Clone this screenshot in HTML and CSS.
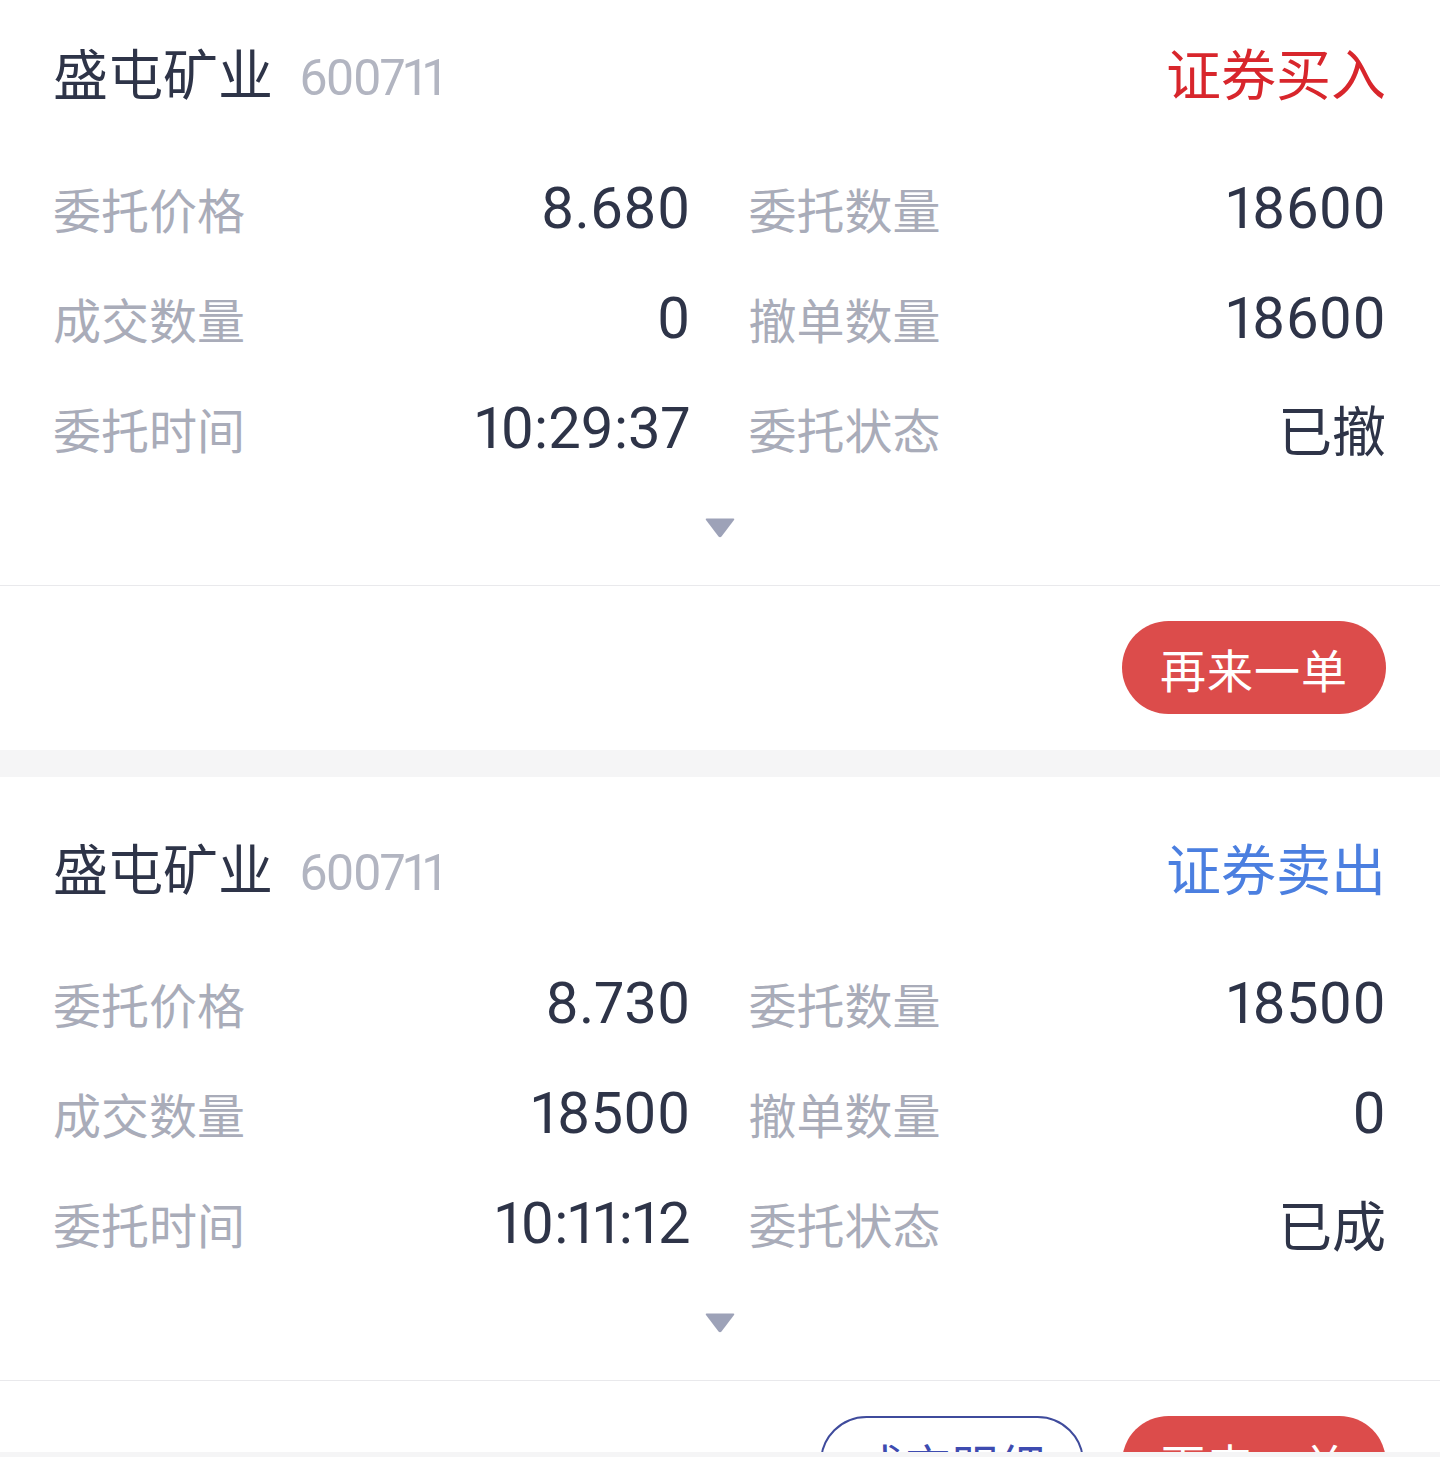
FILE: index.html
```
<!doctype html>
<html lang="zh-CN">
<head>
	<meta charset="utf-8" />
	<meta name="viewport" content="width=device-width, initial-scale=1.0" />
	<title>当日委托</title>
	<link rel="stylesheet" href="styles.css">
</head>
<body>
	<main class="order-list">
		<section class="order">
			<div class="order-body">
				<header class="order-head">
					<div class="stock">
						<span class="stock-name">盛屯矿业</span>
						<span class="stock-code">600711</span>
					</div>
					<span class="side buy">证券买入</span>
				</header>

				<div class="fields">
					<div class="field"><span class="label">委托价格</span><span class="value">8.680</span></div>
					<div class="field"><span class="label">委托数量</span><span class="value">18600</span></div>
					<div class="field"><span class="label">成交数量</span><span class="value">0</span></div>
					<div class="field"><span class="label">撤单数量</span><span class="value">18600</span></div>
					<div class="field"><span class="label">委托时间</span><span class="value">10:29:37</span></div>
					<div class="field"><span class="label">委托状态</span><span class="value cjk">已撤</span></div>
				</div>

				<div class="toggle">
					<svg width="32" height="22" viewBox="0 0 32 22"><path d="M2.5 1.5 H29.5 Q31 1.5 30 3 L17.5 19.5 Q16 21 14.5 19.5 L2 3 Q1 1.5 2.5 1.5 Z" fill="#9da2b8"/></svg>
				</div>
			</div>

			<div class="order-actions">
				<a class="btn btn-red">再来一单</a>
			</div>
		</section>

		<section class="order">
			<div class="order-body">
				<header class="order-head">
					<div class="stock">
						<span class="stock-name">盛屯矿业</span>
						<span class="stock-code">600711</span>
					</div>
					<span class="side sell">证券卖出</span>
				</header>

				<div class="fields">
					<div class="field"><span class="label">委托价格</span><span class="value">8.730</span></div>
					<div class="field"><span class="label">委托数量</span><span class="value">18500</span></div>
					<div class="field"><span class="label">成交数量</span><span class="value">18500</span></div>
					<div class="field"><span class="label">撤单数量</span><span class="value">0</span></div>
					<div class="field"><span class="label">委托时间</span><span class="value">10:11:12</span></div>
					<div class="field"><span class="label">委托状态</span><span class="value cjk">已成</span></div>
				</div>

				<div class="toggle">
					<svg width="32" height="22" viewBox="0 0 32 22"><path d="M2.5 1.5 H29.5 Q31 1.5 30 3 L17.5 19.5 Q16 21 14.5 19.5 L2 3 Q1 1.5 2.5 1.5 Z" fill="#9da2b8"/></svg>
				</div>
			</div>

			<div class="order-actions">
				<a class="btn btn-outline">成交明细</a>
				<a class="btn btn-red">再来一单</a>
			</div>
		</section>
	</main>

	<div class="bottom-bar"></div>
</body>
</html>
```

FILE: styles.css
```
html, body {
	margin: 0;
	height: 100%;
	overflow: hidden;
	background: #f5f5f6;
	font-family: "Noto Sans CJK SC", sans-serif;
	color: #2e3448;
}

/* the list is scrolled a little, the first card is cut at the top */
.order-list {
	margin-top: -18px;
	display: flex;
	flex-direction: column;
	gap: 27px;
}

.order {
	background: #fff;
}

.order-body {
	padding: 54px 54px 0 53px;
	border-bottom: 1px solid #e9e9ec;
}

.order-head {
	display: flex;
	justify-content: space-between;
	align-items: center;
	height: 70px;
}

.stock {
	display: flex;
	align-items: baseline;
	gap: 26px;
}

.stock-name {
	font-size: 55px;
	line-height: 70px;
	color: #2e3448;
}

.stock-code {
	font-family: Roboto, sans-serif;
	font-size: 50px;
	font-variant-numeric: proportional-nums;
	letter-spacing: -2px;
	color: #b2b5c1;
}

.side {
	font-size: 55px;
	line-height: 70px;
}
.side.buy { color: #d8262c; }
.side.sell { color: #4b7fe0; }

.fields {
	margin-top: 47px;
	display: grid;
	grid-template-columns: 1fr 1fr;
	column-gap: 58px;
}

.field {
	display: flex;
	justify-content: space-between;
	align-items: center;
	height: 110px;
}

.label {
	font-size: 48px;
	color: #a9acb9;
}

.value {
	font-family: Roboto, sans-serif;
	font-size: 58px;
	font-variant-numeric: proportional-nums;
	color: #2e3448;
}

.value.cjk {
	font-family: "Noto Sans CJK SC", sans-serif;
	font-size: 54px;
}

.toggle {
	height: 102px;
	display: flex;
	justify-content: center;
	padding-top: 34px;
	box-sizing: border-box;
}

.order-actions {
	display: flex;
	justify-content: flex-end;
	gap: 38px;
	padding: 35px 54px 36px;
}

.btn {
	width: 264px;
	height: 93px;
	border-radius: 47px;
	box-sizing: border-box;
	display: flex;
	align-items: center;
	justify-content: center;
	font-size: 46px;
	letter-spacing: 1px;
}

.btn-red {
	background: #dc4c4b;
	color: #fff;
}

.btn-outline {
	border: 2px solid #3f4b9c;
	color: #3e4bb0;
	background: #fff;
}

.bottom-bar {
	position: fixed;
	left: 0;
	right: 0;
	bottom: 0;
	height: 5px;
	background: #f5f5f6;
}
```
